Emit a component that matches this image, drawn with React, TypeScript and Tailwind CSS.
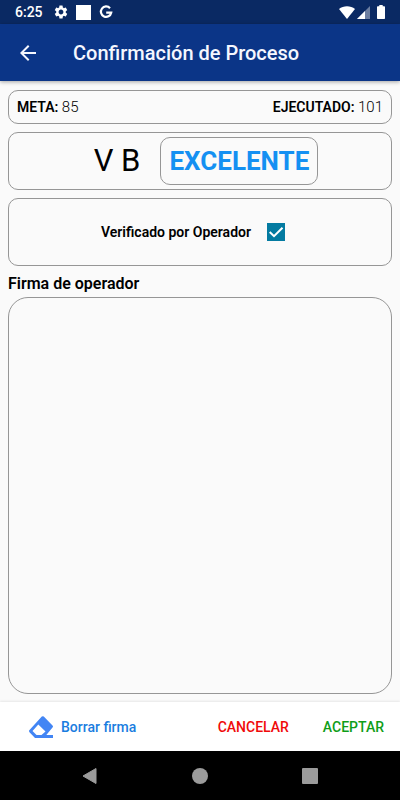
import { useState } from "react"
import { MdArrowBack, MdSettings } from "react-icons/md"

function StatusBar() {
  return (
    <div className="flex h-6 items-center bg-[#0a2963] px-[15px] text-white">
      <span className="text-sm leading-6 font-medium">6:25</span>
      <MdSettings className="ml-[10px] h-4 w-4" />
      <span className="ml-[7px] h-[15px] w-[15px] bg-white" />
      <svg viewBox="0 0 14 14" className="ml-2 h-[14px] w-[14px]" fill="none" stroke="currentColor" strokeWidth="2.2">
        <path d="M11 3.200A5.200 5.200 0 1 0 12.200 7.700H7.200" />
      </svg>
      <div className="ml-auto flex items-center gap-[2px]">
        <svg viewBox="0 0 16 13" className="h-[13px] w-4" fill="currentColor">
          <path d="M8 13L0 3C2.200 1.200 5 .2 8 .2s5.800 1 8 2.800z" />
        </svg>
        <svg viewBox="0 0 13 13" className="h-[13px] w-[13px]" fill="currentColor">
          <path d="M13 0v13H0z" opacity=".4" />
          <path d="M8 5v8H0z" />
        </svg>
        <svg viewBox="0 0 8 14" className="ml-[5px] h-[14px] w-2" fill="currentColor">
          <path d="M2.300 0h3.400v1.300h1.600c.4 0 .7.3.7.7v11.300c0 .4-.3.7-.7.7H.7c-.4 0-.7-.3-.7-.7V2c0-.4.3-.7.7-.7h1.600z" />
        </svg>
      </div>
    </div>
  )
}

function Header() {
  return (
    <header className="relative flex h-[57px] items-center bg-[#0b3587] px-4 text-[#f5f7ff] shadow-[0_1px_4px_rgba(0,0,0,0.35)]">
      <button type="button" aria-label="Volver" className="flex h-6 w-6 items-center justify-center">
        <MdArrowBack className="h-6 w-6" />
      </button>
      <h1 className="ml-[33px] text-xl leading-7 font-medium">Confirmación de Proceso</h1>
    </header>
  )
}

function EraserIcon() {
  return (
    <svg viewBox="0 0 24 22" className="h-[22px] w-6" fill="#4285f4" fillRule="evenodd">
      <path d="M12.800.6q1-.9 2 0l8.700 8.800q1 1 0 2L17.300 19H24v3H6L.5 16.300q-1-1.200 0-2.400zM9.300 8.600L3.500 15l4 4H12.500l4-3.600z" />
    </svg>
  )
}

function NavigationBar() {
  return (
    <nav className="flex h-[49px] items-center justify-center gap-[94px] bg-black text-[#9b9b9b]">
      <button type="button" aria-label="Atrás">
        <svg viewBox="0 0 16 18" className="h-[18px] w-4" fill="currentColor">
          <path d="M14 1.500v15L1 9z" stroke="currentColor" strokeLinejoin="round" />
        </svg>
      </button>
      <button type="button" aria-label="Inicio" className="h-4 w-4 rounded-full bg-current" />
      <button type="button" aria-label="Recientes" className="h-4 w-4 rounded-[1px] bg-current" />
    </nav>
  )
}

export default function App() {
  const [verified, setVerified] = useState(true)

  return (
    <div className="flex min-h-screen flex-col bg-[#fafafa] font-[Roboto,sans-serif] text-black">
      <StatusBar />
      <Header />

      <main className="flex flex-1 flex-col px-2 pt-[9px] pb-2">
        <div className="flex h-[34px] items-center justify-between rounded-[10px] border border-[#969696] px-2 pt-[2px] text-sm">
          <p>
            <span className="font-semibold">META:</span> <span className="text-[15px] font-light">85</span>
          </p>
          <p>
            <span className="font-semibold">EJECUTADO:</span> <span className="text-[15px] font-light">101</span>
          </p>
        </div>

        <div className="mt-2 flex h-[58px] items-center justify-center gap-5 rounded-[10px] border border-[#969696] pl-3">
          <span className="text-[31px] leading-9 font-normal">V B</span>
          <span className="flex h-12 items-center rounded-[10px] border border-[#969696] px-2 text-[26px] font-bold text-[#1490f2]">
            EXCELENTE
          </span>
        </div>

        <div className="mt-2 flex h-[68px] items-center justify-center rounded-[10px] border border-[#969696] pr-[14px]">
          <label className="flex items-center gap-4 text-sm font-semibold">
            Verificado por Operador
            <span className="grid h-[18px] w-[18px]">
              <input
                type="checkbox"
                checked={verified}
                onChange={(e) => setVerified(e.target.checked)}
                className="col-start-1 row-start-1 h-[18px] w-[18px] appearance-none border-2 border-[#047ba1] checked:bg-[#047ba1]"
              />
              {verified && (
                <svg
                  viewBox="0 0 18 18"
                  className="pointer-events-none col-start-1 row-start-1 h-[18px] w-[18px]"
                  fill="none"
                  stroke="white"
                  strokeWidth="2"
                >
                  <path d="M2.700 9l4.300 4.200L15.500 4.700" />
                </svg>
              )}
            </span>
          </label>
        </div>

        <h2 className="mt-2 text-base leading-5 font-semibold">Firma de operador</h2>
        <div className="mt-[3px] flex-1 rounded-[20px] border border-[#969696]" />
      </main>

      <footer className="flex h-[49px] items-center bg-white px-4 text-sm font-medium shadow-[0_-1px_2px_rgba(0,0,0,0.08)]">
        <button type="button" className="ml-[13px] flex items-center gap-2 text-[#1a7de0]">
          <EraserIcon />
          Borrar firma
        </button>
        <button type="button" className="ml-auto text-[#f00a0a]">
          CANCELAR
        </button>
        <button type="button" className="ml-[34px] text-[#0f9d18]">
          ACEPTAR
        </button>
      </footer>
      <NavigationBar />
    </div>
  )
}
